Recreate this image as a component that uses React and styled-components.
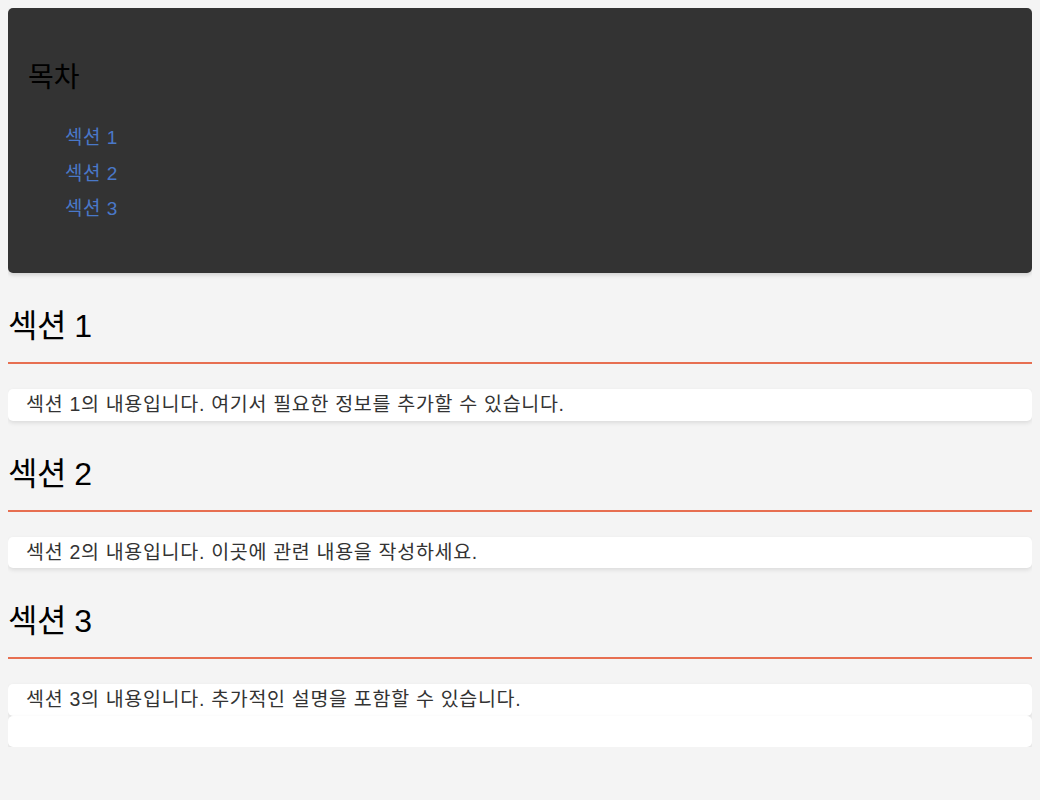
import React from "react";
import styled, { createGlobalStyle } from "styled-components";

const GlobalStyle = createGlobalStyle`
  body {
    margin: 8px;
    background: #f4f4f4;
    font-family: "Liberation Sans", Arial, "Noto Sans CJK KR", sans-serif;
    color: #333;
  }
`;

const sections = [
  { id: "section1", title: "섹션 1", text: "섹션 1의 내용입니다. 여기서 필요한 정보를 추가할 수 있습니다." },
  { id: "section2", title: "섹션 2", text: "섹션 2의 내용입니다. 이곳에 관련 내용을 작성하세요." },
  { id: "section3", title: "섹션 3", text: "섹션 3의 내용입니다. 추가적인 설명을 포함할 수 있습니다." },
];

function App() {
  return (
    <>
      <GlobalStyle />
      <Toc>
        <TocTitle>목차</TocTitle>
        <TocList>
          {sections.map((s) => (
            <li key={s.id}>
              <a href={`#${s.id}`}>{s.title}</a>
            </li>
          ))}
        </TocList>
      </Toc>
      {sections.map((s) => (
        <section key={s.id} id={s.id}>
          <SectionTitle>{s.title}</SectionTitle>
          <Content>{s.text}</Content>
        </section>
      ))}
      <Content />
    </>
  );
}

const Toc = styled.nav`
  background: #333;
  border-radius: 5px;
  padding: 20px 20px 53px;
  box-shadow: 0 2px 4px rgba(0, 0, 0, 0.15);
`;

const TocTitle = styled.h2`
  margin: 34px 0 33px;
  font-size: 28px;
  line-height: 32px;
  font-weight: normal;
  color: #000;
`;

const TocList = styled.ul`
  list-style: none;
  margin: 0;
  padding-left: 37px;
  display: flex;
  flex-direction: column;
  gap: 13.5px;
  li {
    font-size: 19px;
    line-height: 22px;
    letter-spacing: 0.5px;
  }
  a {
    color: #4a78c8;
    text-decoration: none;
  }
`;

const SectionTitle = styled.h2`
  margin: 33px 0 25px;
  padding-bottom: 16px;
  border-bottom: 2px solid #e76f51;
  font-size: 32px;
  line-height: 40px;
  letter-spacing: -0.5px;
  font-weight: normal;
  color: #000;
`;

const Content = styled.p`
  margin: 0;
  min-height: 31px;
  box-sizing: border-box;
  padding: 4px 18px;
  background: #fff;
  border-radius: 5px;
  box-shadow: 0 2px 4px rgba(0, 0, 0, 0.1);
  font-size: 19.5px;
  line-height: 23.5px;
  letter-spacing: 0.7px;
`;

export default App;
